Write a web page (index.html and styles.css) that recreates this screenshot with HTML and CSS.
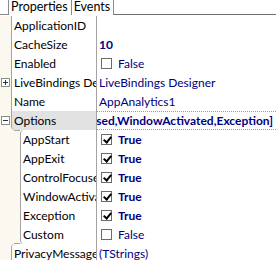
FILE: index.html
```html
<!DOCTYPE html>
<html lang="en">
<head>
    <meta charset="UTF-8">
    <title>Object Inspector</title>
    <link rel="stylesheet" href="styles.css">
</head>
<body>
    <div class="inspector">
        <div class="tabs">
            <div class="tab-lead"></div>
            <div class="tab active">Properties</div>
            <div class="tab">Events</div>
            <div class="tab-rest"></div>
        </div>
        <div class="grid">
            <div class="row"><div class="gutter"></div><div class="name">ApplicationID</div><div class="value"></div></div>
            <div class="row"><div class="gutter"></div><div class="name">CacheSize</div><div class="value strong">10</div></div>
            <div class="row"><div class="gutter"></div><div class="name">Enabled</div><div class="value"><span class="check"></span>False</div></div>
            <div class="row">
                <div class="gutter">
                    <svg class="toggle" width="9" height="9" viewBox="0 0 9 9"><rect x="0.5" y="0.5" width="8" height="8" fill="#fff" stroke="#8c8c8c"/><path d="M2 4.5h5M4.5 2v5" stroke="#333" stroke-width="1"/></svg>
                </div>
                <div class="name">LiveBindings Designer</div><div class="value">LiveBindings Designer</div>
            </div>
            <div class="row"><div class="gutter"></div><div class="name">Name</div><div class="value">AppAnalytics1</div></div>
            <div class="row selected">
                <div class="gutter">
                    <svg class="toggle" width="9" height="9" viewBox="0 0 9 9"><rect x="0.5" y="0.5" width="8" height="8" fill="#fff" stroke="#8c8c8c"/><path d="M2 4.5h5" stroke="#333" stroke-width="1"/></svg>
                </div>
                <div class="name parent">Options</div><div class="value set"><span>[AppStart,AppExit,ControlFocused,WindowActivated,Exception]</span></div>
            </div>
            <div class="group">
                <div class="row sub"><div class="gutter"></div><div class="name">AppStart</div><div class="value strong"><span class="check on"></span>True</div></div>
                <div class="row sub"><div class="gutter"></div><div class="name">AppExit</div><div class="value strong"><span class="check on"></span>True</div></div>
                <div class="row sub"><div class="gutter"></div><div class="name">ControlFocused</div><div class="value strong"><span class="check on"></span>True</div></div>
                <div class="row sub"><div class="gutter"></div><div class="name">WindowActivated</div><div class="value strong"><span class="check on"></span>True</div></div>
                <div class="row sub"><div class="gutter"></div><div class="name">Exception</div><div class="value strong"><span class="check on"></span>True</div></div>
                <div class="row sub"><div class="gutter"></div><div class="name">Custom</div><div class="value"><span class="check"></span>False</div></div>
            </div>
            <div class="row after"><div class="gutter"></div><div class="name">PrivacyMessage</div><div class="value">(TStrings)</div></div>
        </div>
    </div>
</body>
</html>
```

FILE: styles.css
```css
html, body {
    margin: 0;
    padding: 0;
}
body {
    width: 276px;
    height: 260px;
    overflow: hidden;
    background: #ffffff;
    font-family: Lato, "Open Sans", sans-serif;
    font-size: 12px;
    color: #000000;
}
.inspector {
    display: flex;
    flex-direction: column;
}

/* tab strip */
.tabs {
    display: flex;
    height: 16px;
}
.tab-lead {
    width: 9px;
    height: 15px;
    box-sizing: border-box;
    border-right: 1px solid #8a8a8a;
    border-bottom: 1px solid #8a8a8a;
}
.tab {
    height: 15px;
    box-sizing: border-box;
    padding: 0 3px 0 2px;
    line-height: 13px;
    font-size: 12.5px;
    border-right: 1px solid #8a8a8a;
}
.tab-rest {
    flex: 1;
    height: 17px;
    box-sizing: border-box;
    border-bottom: 3px double #6e6e6e;
}

/* property grid */
.grid {
    display: flex;
    flex-direction: column;
    background: #fbf8f0;
}
.row {
    display: flex;
    height: 19px;
    line-height: 19px;
}
.gutter {
    width: 11px;
    flex: none;
    display: flex;
    align-items: center;
}
.name {
    width: 82px;
    flex: none;
    border-left: 1px solid #a4a4a4;
    background: #ffffff;
    padding-left: 2px;
    white-space: nowrap;
    overflow: hidden;
}
.row.sub .gutter {
    width: 20px;
}
.row.sub .name {
    width: 73px;
}
.value {
    flex: 1;
    min-width: 0;
    border-left: 1px solid #a4a4a4;
    background: #ffffff;
    padding-left: 2px;
    display: flex;
    align-items: center;
    white-space: nowrap;
    overflow: hidden;
    color: #000080;
}
.value.strong {
    font-weight: bold;
}
.selected .name {
    background: #e2e2e2;
}
.name.parent {
    border-bottom-left-radius: 4px;
}
.value.set {
    justify-content: flex-end;
    font-weight: bold;
    padding-right: 3px;
    box-sizing: border-box;
    border-top: 1px dotted #9a9a9a;
    border-bottom: 1px dotted #9a9a9a;
}
.value.set span {
    flex: none;
}

/* bracket for nested options */
.group {
    position: relative;
}
.group::before,
.group::after {
    content: "";
    position: absolute;
    left: 14px;
    width: 6px;
    height: 1px;
    background: #a4a4a4;
}
.group::before {
    top: 0;
}
.group::after {
    bottom: 0;
}
.group .row:first-child .name {
    border-top-left-radius: 4px;
}
.group .row:last-child .name {
    border-bottom-left-radius: 4px;
}
.row.after .name {
    border-top-left-radius: 4px;
}

/* expand box */
.toggle {
    margin-left: 1px;
    display: block;
}

/* checkbox */
.check {
    width: 11px;
    height: 11px;
    box-sizing: border-box;
    border: 1px solid #6a6a6a;
    background: #ffffff;
    margin-left: 2px;
    margin-right: 6px;
    position: relative;
    flex: none;
}
.check.on::after {
    content: "";
    position: absolute;
    left: 3px;
    top: 0;
    width: 3px;
    height: 6px;
    border-right: 2px solid #000000;
    border-bottom: 2px solid #000000;
    transform: rotate(40deg);
}
```
